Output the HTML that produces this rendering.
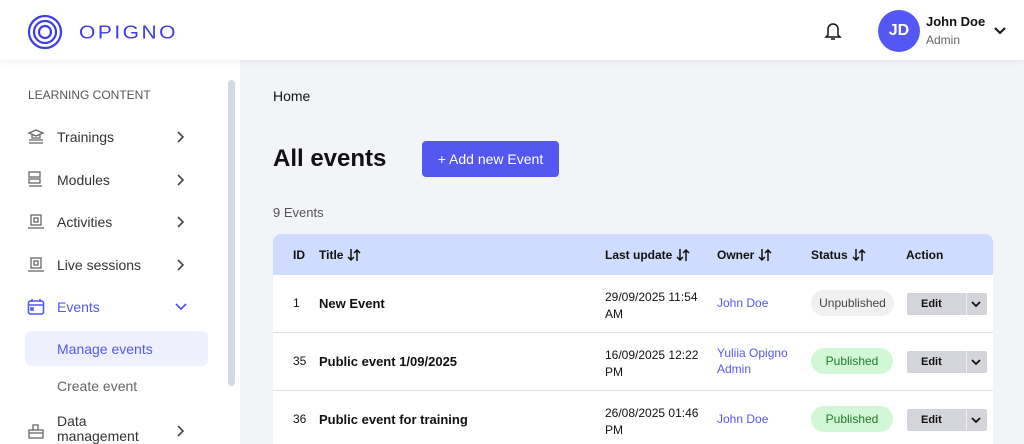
<!DOCTYPE html>
<html><head><meta charset="utf-8"><style>
*{box-sizing:border-box;margin:0;padding:0}
html,body{width:1024px;height:444px;overflow:hidden}
body{font-family:"Liberation Sans",sans-serif;background:#f3f4f8;position:relative;color:#111}
.top{position:absolute;left:0;top:0;width:1024px;height:60px;background:#fff;box-shadow:0 2px 6px rgba(0,0,0,.06);z-index:2}
.side{position:absolute;left:0;top:60px;width:240px;height:384px;background:#fff}
.nav{position:absolute;left:27px;font-size:14px;color:#333;height:18px;width:200px}
.nav .t{position:absolute;left:30px;top:1px;white-space:nowrap}
.chev{position:absolute;left:150px;top:3px}
.ic{position:absolute;left:0;top:0}
.abs{position:absolute}
.row{position:absolute;left:273px;width:720px;background:#fff;border-bottom:1px solid #e3e3e3}
.edit{position:absolute;width:80px;height:22px;background:#d4d5da;border-radius:2px;font-size:11px;font-weight:bold;color:#111}
.pill{position:absolute;height:26px;border-radius:13px;font-size:12px;text-align:center;line-height:26px}
.srt{display:inline-block;vertical-align:-3px;margin-left:4px}
</style></head><body>
<div class="top">
<svg class="abs" style="left:27px;top:14px" width="36" height="36" viewBox="0 0 36 36" fill="none" stroke="#3b3fe0" stroke-width="2.2"><circle cx="18" cy="18" r="16"/><circle cx="18" cy="18" r="11"/><circle cx="18" cy="18" r="6"/></svg>
<div class="abs" style="left:79px;top:21px;font-size:21px;color:#3b3fe0;letter-spacing:2.5px;transform:scaleY(0.9)">OPIGNO</div>
<svg class="abs" style="left:823px;top:21px" width="20" height="20" viewBox="0 0 20 20" fill="none" stroke="#111" stroke-width="1.5"><path d="M5 14V8a5 5 0 0 1 10 0v6l2 2H3z"/><path d="M8 18h4"/></svg>
<div class="abs" style="left:878px;top:10px;width:42px;height:42px;border-radius:50%;background:#5557f5;color:#fff;font-size:16px;font-weight:bold;text-align:center;line-height:42px">JD</div>
<div class="abs" style="left:926px;top:14px;font-size:13px;font-weight:bold">John Doe</div>
<div class="abs" style="left:926px;top:33px;font-size:12px;color:#666">Admin</div>
<svg class="abs" style="left:994px;top:27px" width="12" height="8" viewBox="0 0 12 8" fill="none" stroke="#111" stroke-width="2"><path d="M1 1l5 5 5-5"/></svg>
</div>
<div class="side">
<div class="abs" style="left:228px;top:20px;width:7px;height:306px;background:#d3dae3;border-radius:4px"></div>
<div class="abs" style="left:28px;top:28px;font-size:12px;color:#555">LEARNING CONTENT</div>

<div class="nav" style="top:68px"><svg class="ic" width="18" height="18" viewBox="0 0 18 18" fill="none" stroke="#666" stroke-width="1.3"><path d="M2 5l7-3 7 3-7 3z M5 7v3h8V7 M2 12h14 M2 15h14"/></svg><span class="t">Trainings</span><svg class="chev" width="8" height="12" viewBox="0 0 8 12" fill="none" stroke="#444" stroke-width="1.6"><path d="M1 1l5 5-5 5"/></svg></div>
<div class="nav" style="top:111px"><svg class="ic" width="18" height="18" viewBox="0 0 18 18" fill="none" stroke="#666" stroke-width="1.3"><rect x="2" y="1" width="11" height="5"/><rect x="2" y="8" width="11" height="4"/><path d="M2 15h13"/></svg><span class="t">Modules</span><svg class="chev" width="8" height="12" viewBox="0 0 8 12" fill="none" stroke="#444" stroke-width="1.6"><path d="M1 1l5 5-5 5"/></svg></div>
<div class="nav" style="top:153px"><svg class="ic" width="18" height="18" viewBox="0 0 18 18" fill="none" stroke="#666" stroke-width="1.3"><rect x="4" y="2" width="10" height="10"/><rect x="7" y="5" width="4" height="4"/><path d="M1 15h16"/></svg><span class="t">Activities</span><svg class="chev" width="8" height="12" viewBox="0 0 8 12" fill="none" stroke="#444" stroke-width="1.6"><path d="M1 1l5 5-5 5"/></svg></div>
<div class="nav" style="top:196px"><svg class="ic" width="18" height="18" viewBox="0 0 18 18" fill="none" stroke="#666" stroke-width="1.3"><rect x="4" y="2" width="10" height="10"/><rect x="7" y="5" width="4" height="4"/><path d="M1 15h16"/></svg><span class="t">Live sessions</span><svg class="chev" width="8" height="12" viewBox="0 0 8 12" fill="none" stroke="#444" stroke-width="1.6"><path d="M1 1l5 5-5 5"/></svg></div>
<div class="nav" style="top:238px;color:#5558f0"><svg class="ic" width="18" height="18" viewBox="0 0 18 18" fill="none" stroke="#5558f0" stroke-width="1.6"><rect x="1.5" y="3" width="15" height="13" rx="2"/><path d="M5 1v3M13 1v3M1.5 7h15"/><rect x="4" y="10" width="2" height="2"/></svg><span class="t">Events</span><svg class="chev" style="left:148px;top:5px" width="12" height="8" viewBox="0 0 12 8" fill="none" stroke="#5558f0" stroke-width="1.8"><path d="M1 1l5 5 5-5"/></svg></div>
<div class="abs" style="left:25px;top:271px;width:183px;height:35px;background:#eef0fd;border-radius:6px"></div>
<div class="abs" style="left:57px;top:281px;font-size:14px;color:#5558f0">Manage events</div>
<div class="abs" style="left:57px;top:318px;font-size:14px;color:#666">Create event</div>
<div class="nav" style="top:362px"><svg class="ic" width="18" height="18" viewBox="0 0 18 18" fill="none" stroke="#666" stroke-width="1.3"><rect x="2" y="8" width="14" height="8"/><path d="M2 11h14M6 8V3h5v5"/></svg><span class="t" style="top:-8px;line-height:15px">Data<br>management</span><svg class="chev" width="8" height="12" viewBox="0 0 8 12" fill="none" stroke="#444" stroke-width="1.6"><path d="M1 1l5 5-5 5"/></svg></div>
</div>
<div class="abs" style="left:273px;top:88px;font-size:14px">Home</div>
<div class="abs" style="left:273px;top:145px;font-size:24px;font-weight:bold">All events</div>
<div class="abs" style="left:422px;top:141px;width:137px;height:36px;background:#5558f0;border-radius:4px;color:#fff;font-size:14px;text-align:center;line-height:36px">+ Add new Event</div>
<div class="abs" style="left:273px;top:205px;font-size:13px;color:#555">9 Events</div>
<div class="abs" style="left:273px;top:234px;width:720px;height:41px;background:#cfdcff;border-radius:8px 8px 0 0;font-size:12px;font-weight:bold">
<span class="abs" style="left:20px;top:14px">ID</span>
<span class="abs" style="left:46px;top:14px;white-space:nowrap">Title<svg class="srt" width="14" height="14" viewBox="0 0 14 14" fill="none" stroke="#111" stroke-width="1.5"><path d="M4 1v11M1 9l3 3 3-3M10 13V2M7 5l3-3 3 3"/></svg></span>
<span class="abs" style="left:332px;top:14px;white-space:nowrap">Last update<svg class="srt" width="14" height="14" viewBox="0 0 14 14" fill="none" stroke="#111" stroke-width="1.5"><path d="M4 1v11M1 9l3 3 3-3M10 13V2M7 5l3-3 3 3"/></svg></span>
<span class="abs" style="left:444px;top:14px;white-space:nowrap">Owner<svg class="srt" width="14" height="14" viewBox="0 0 14 14" fill="none" stroke="#111" stroke-width="1.5"><path d="M4 1v11M1 9l3 3 3-3M10 13V2M7 5l3-3 3 3"/></svg></span>
<span class="abs" style="left:538px;top:14px;white-space:nowrap">Status<svg class="srt" width="14" height="14" viewBox="0 0 14 14" fill="none" stroke="#111" stroke-width="1.5"><path d="M4 1v11M1 9l3 3 3-3M10 13V2M7 5l3-3 3 3"/></svg></span>
<span class="abs" style="left:633px;top:14px">Action</span></div>

<div class="row" style="top:275px;height:58px">
<span class="abs" style="left:20px;top:21px;font-size:12px">1</span><span class="abs" style="left:46px;top:21px;font-size:13px;font-weight:bold">New Event</span>
<span class="abs" style="left:332px;top:14px;font-size:12px;line-height:17px">29/09/2025 11:54<br>AM</span>
<span class="abs" style="left:444px;top:21px;font-size:12px;color:#5558f0">John Doe</span>
<span class="pill" style="left:538px;top:15px;width:83px;background:#f0f0f0;color:#444">Unpublished</span>
<span class="edit" style="left:634px;top:18px"><span class="abs" style="left:14px;top:5px">Edit</span><span class="abs" style="left:59px;top:0;width:1px;height:22px;background:#eee"></span><svg class="abs" style="left:64px;top:8px" width="10" height="7" viewBox="0 0 10 7" fill="none" stroke="#111" stroke-width="1.8"><path d="M1 1l4 4 4-4"/></svg></span></div>
<div class="row" style="top:333px;height:58px">
<span class="abs" style="left:20px;top:21px;font-size:12px">35</span><span class="abs" style="left:46px;top:21px;font-size:13px;font-weight:bold">Public event 1/09/2025</span>
<span class="abs" style="left:332px;top:14px;font-size:12px;line-height:17px">16/09/2025 12:22<br>PM</span>
<span class="abs" style="left:444px;top:12px;font-size:12px;line-height:16px;color:#5558f0">Yuliia Opigno<br>Admin</span>
<span class="pill" style="left:538px;top:15px;width:82px;background:#d1f7d6;color:#237a2d">Published</span>
<span class="edit" style="left:634px;top:18px"><span class="abs" style="left:14px;top:5px">Edit</span><span class="abs" style="left:59px;top:0;width:1px;height:22px;background:#eee"></span><svg class="abs" style="left:64px;top:8px" width="10" height="7" viewBox="0 0 10 7" fill="none" stroke="#111" stroke-width="1.8"><path d="M1 1l4 4 4-4"/></svg></span></div>
<div class="row" style="top:391px;height:58px">
<span class="abs" style="left:20px;top:21px;font-size:12px">36</span><span class="abs" style="left:46px;top:21px;font-size:13px;font-weight:bold">Public event for training</span>
<span class="abs" style="left:332px;top:14px;font-size:12px;line-height:17px">26/08/2025 01:46<br>PM</span>
<span class="abs" style="left:444px;top:21px;font-size:12px;color:#5558f0">John Doe</span>
<span class="pill" style="left:538px;top:15px;width:82px;background:#d1f7d6;color:#237a2d">Published</span>
<span class="edit" style="left:634px;top:18px"><span class="abs" style="left:14px;top:5px">Edit</span><span class="abs" style="left:59px;top:0;width:1px;height:22px;background:#eee"></span><svg class="abs" style="left:64px;top:8px" width="10" height="7" viewBox="0 0 10 7" fill="none" stroke="#111" stroke-width="1.8"><path d="M1 1l4 4 4-4"/></svg></span></div>
</body></html>
